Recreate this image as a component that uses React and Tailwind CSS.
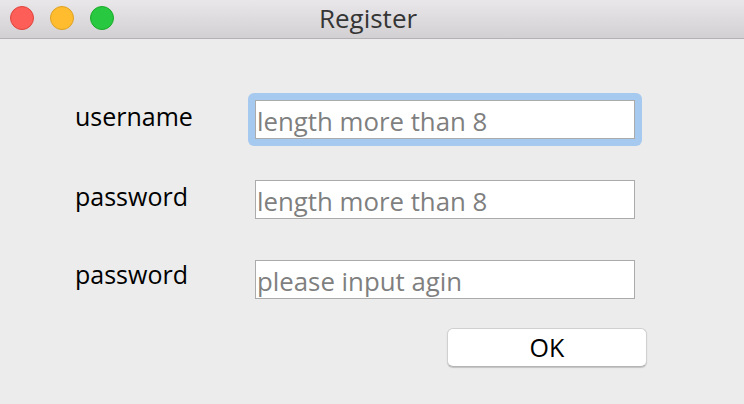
import React from "react";

const FONT = { fontFamily: '"Open Sans", "Liberation Sans", Arial, sans-serif' };

function Field({ label, placeholder, focused, lift }) {
  const input = (
    <input
      className="block w-[380px] h-[39px] border border-[#ababab] bg-white pl-[1px] pr-[3px] pt-[3px] pb-0 text-[25.8px] text-black placeholder:text-[#7f7f7f] outline-none"
      style={FONT}
      placeholder={placeholder}
    />
  );
  return (
    <div className="flex items-center">
      <div className="w-[255px] shrink-0 pl-[75px]">
        <div className={`text-[25px] leading-none text-black ${lift}`}>{label}</div>
      </div>
      {focused ? (
        <div className="-m-[7px] rounded-[6px] bg-[#a6c9ef] p-[7px]">{input}</div>
      ) : (
        input
      )}
    </div>
  );
}

export default function App() {
  return (
    <div className="w-[744px] h-[404px] overflow-hidden bg-[#ececec] flex flex-col" style={FONT}>
      <div className="relative h-[39px] shrink-0 border-b border-[#b3b1b3] bg-gradient-to-b from-[#e9e7e9] to-[#d2d0d2] flex items-center justify-center">
        <div className="absolute left-[10px] top-[6px] flex gap-[16px]">
          <div className="h-[24px] w-[24px] rounded-full bg-[#fd5e57] border border-[#e0443e]" />
          <div className="h-[24px] w-[24px] rounded-full bg-[#febc2e] border border-[#dea123]" />
          <div className="h-[24px] w-[24px] rounded-full bg-[#28c840] border border-[#1aab29]" />
        </div>
        <div className="text-[26px] leading-none text-[#353535] pb-[2px] pr-[8px]">Register</div>
      </div>
      <div className="flex flex-col pt-[61px]">
        <div className="flex flex-col gap-[41px]">
          <Field label="username" placeholder="length more than 8" focused lift="mb-[6px]" />
          <Field label="password" placeholder="length more than 8" lift="mb-[7px]" />
          <Field label="password" placeholder="please input agin" lift="mb-[10px]" />
        </div>
        <div className="mt-[29px] ml-[447px]">
          <button
            className="w-[200px] h-[39px] rounded-[6px] bg-white border border-[#d0d0d0] border-b-[#b5b5b5] shadow-[0_1px_1px_rgba(0,0,0,0.18)] text-[25px] leading-none text-black"
            style={FONT}
          >
            OK
          </button>
        </div>
      </div>
    </div>
  );
}
